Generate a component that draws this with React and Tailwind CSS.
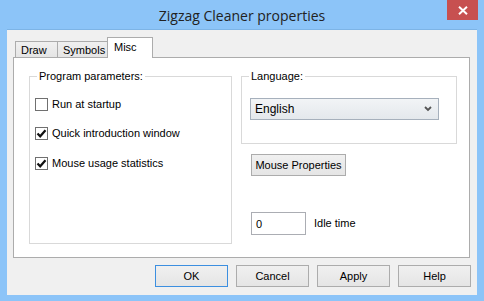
import { useState } from 'react'

const ui = { fontFamily: '"Liberation Sans", Arial, sans-serif' }

function Check({ checked }) {
  return (
    <span className="w-[13px] h-[13px] border border-[#707070] bg-white flex items-center justify-center shrink-0">
      {checked && (
        <svg width="11" height="11" viewBox="0 0 11 11">
          <path d="M1.5 5.5 L4.2 8.3 L9.5 2.2" fill="none" stroke="#111" strokeWidth="2.2" />
        </svg>
      )}
    </span>
  )
}

function CheckRow({ label, checked, className = '' }) {
  return (
    <label className={`flex items-center h-[13px] ${className}`}>
      <Check checked={checked} />
      <span className="ml-[4px] leading-[13px]">{label}</span>
    </label>
  )
}

function Group({ label, className = '', children }) {
  return (
    <div className={`relative border border-[#d9d9d9] ${className}`}>
      <span className="absolute left-[7px] top-[-8px] px-[2px] bg-white leading-[14px]">{label}</span>
      {children}
    </div>
  )
}

function Btn({ children, primary, className = '' }) {
  return (
    <button
      className={`h-[22px] border bg-gradient-to-b from-[#f0f0f0] to-[#e5e5e5] text-[11px] text-black leading-[20px] ${
        primary ? 'border-[#3c8fe0]' : 'border-[#acacac]'
      } ${className}`}
    >
      {children}
    </button>
  )
}

export default function App() {
  const [tab] = useState('Misc')
  const tabs = [
    { name: 'Draw', w: 'w-[43px]' },
    { name: 'Symbols', w: 'w-[51px]' },
    { name: 'Misc', w: 'w-[46px]' },
  ]

  return (
    <div className="w-[484px] h-[301px] bg-[#8cc4f8] flex flex-col text-[11px] text-black" style={ui}>
      <div className="relative h-[29px] flex items-center justify-center">
        <span className="text-[14px] text-[#222] pt-[1px]" style={{ fontFamily: '"Open Sans", "Noto Sans", sans-serif' }}>
          Zigzag Cleaner properties
        </span>
        <div className="absolute right-[6px] top-0 w-[31px] h-[20px] bg-[#c75050] flex items-center justify-center">
          <svg width="10" height="9" viewBox="0 0 10 9">
            <path d="M1 0.8 L9 8.2 M9 0.8 L1 8.2" stroke="#fff" strokeWidth="2" />
          </svg>
        </div>
      </div>

      <div className="mx-[7px] w-[470px] h-[266px] bg-[#f0f0f0] border-t border-[#7db4e6] pt-[7px] pl-[6px] flex flex-col">
        <div className="flex items-end h-[20px] pl-[2px]">
          {tabs.map((t) =>
            t.name === tab ? (
              <div
                key={t.name}
                className={`${t.w} -ml-px h-[21px] -mb-px relative z-10 bg-white border border-b-0 border-[#acacac] pl-[6px] pt-[2px] leading-[14px]`}
              >
                {t.name}
              </div>
            ) : (
              <div
                key={t.name}
                className={`${t.w} -ml-px first:ml-0 h-[16px] bg-gradient-to-b from-[#f0f0f0] to-[#e5e5e5] border border-b-0 border-[#acacac] pl-[5px] leading-[15px] pt-[1px]`}
              >
                {t.name}
              </div>
            )
          )}
        </div>

        <div className="w-[457px] h-[201px] bg-white border border-[#acacac] pt-[18px] pl-[15px] flex gap-[9px]">
          <Group label="Program parameters:" className="w-[203px] h-[168px] pt-[21px] pl-[5px]">
            <CheckRow label="Run at startup" />
            <CheckRow label="Quick introduction window" checked className="mt-[16px]" />
            <CheckRow label="Mouse usage statistics" checked className="mt-[17px]" />
          </Group>

          <div className="flex flex-col">
            <Group label="Language:" className="w-[216px] h-[68px] pt-[21px] pl-[8px]">
              <div className="w-[189px] h-[22px] border border-[#a6b0bc] bg-gradient-to-b from-[#f2f4f6] to-[#e4e8ec] flex items-center justify-between pl-[4px] pr-[6px]">
                <span className="leading-[14px] text-[12px]">English</span>
                <svg width="8" height="6" viewBox="0 0 8 6">
                  <path d="M1 1 L4 4 L7 1" fill="none" stroke="#555" strokeWidth="1.8" />
                </svg>
              </div>
            </Group>

            <Btn className="w-[95px] mt-[10px] ml-[10px]">Mouse Properties</Btn>

            <div className="flex items-center mt-[36px] ml-[10px]">
              <div className="w-[55px] h-[23px] border border-[#abadb3] bg-white pl-[4px] flex items-center leading-[14px]">0</div>
              <span className="ml-[8px]">Idle time</span>
            </div>
          </div>
        </div>

        <div className="flex justify-end gap-[8px] pr-[6px] mt-[7px]">
          <Btn primary className="w-[73px]">OK</Btn>
          <Btn className="w-[73px]">Cancel</Btn>
          <Btn className="w-[73px]">Apply</Btn>
          <Btn className="w-[73px]">Help</Btn>
        </div>
      </div>
    </div>
  )
}
